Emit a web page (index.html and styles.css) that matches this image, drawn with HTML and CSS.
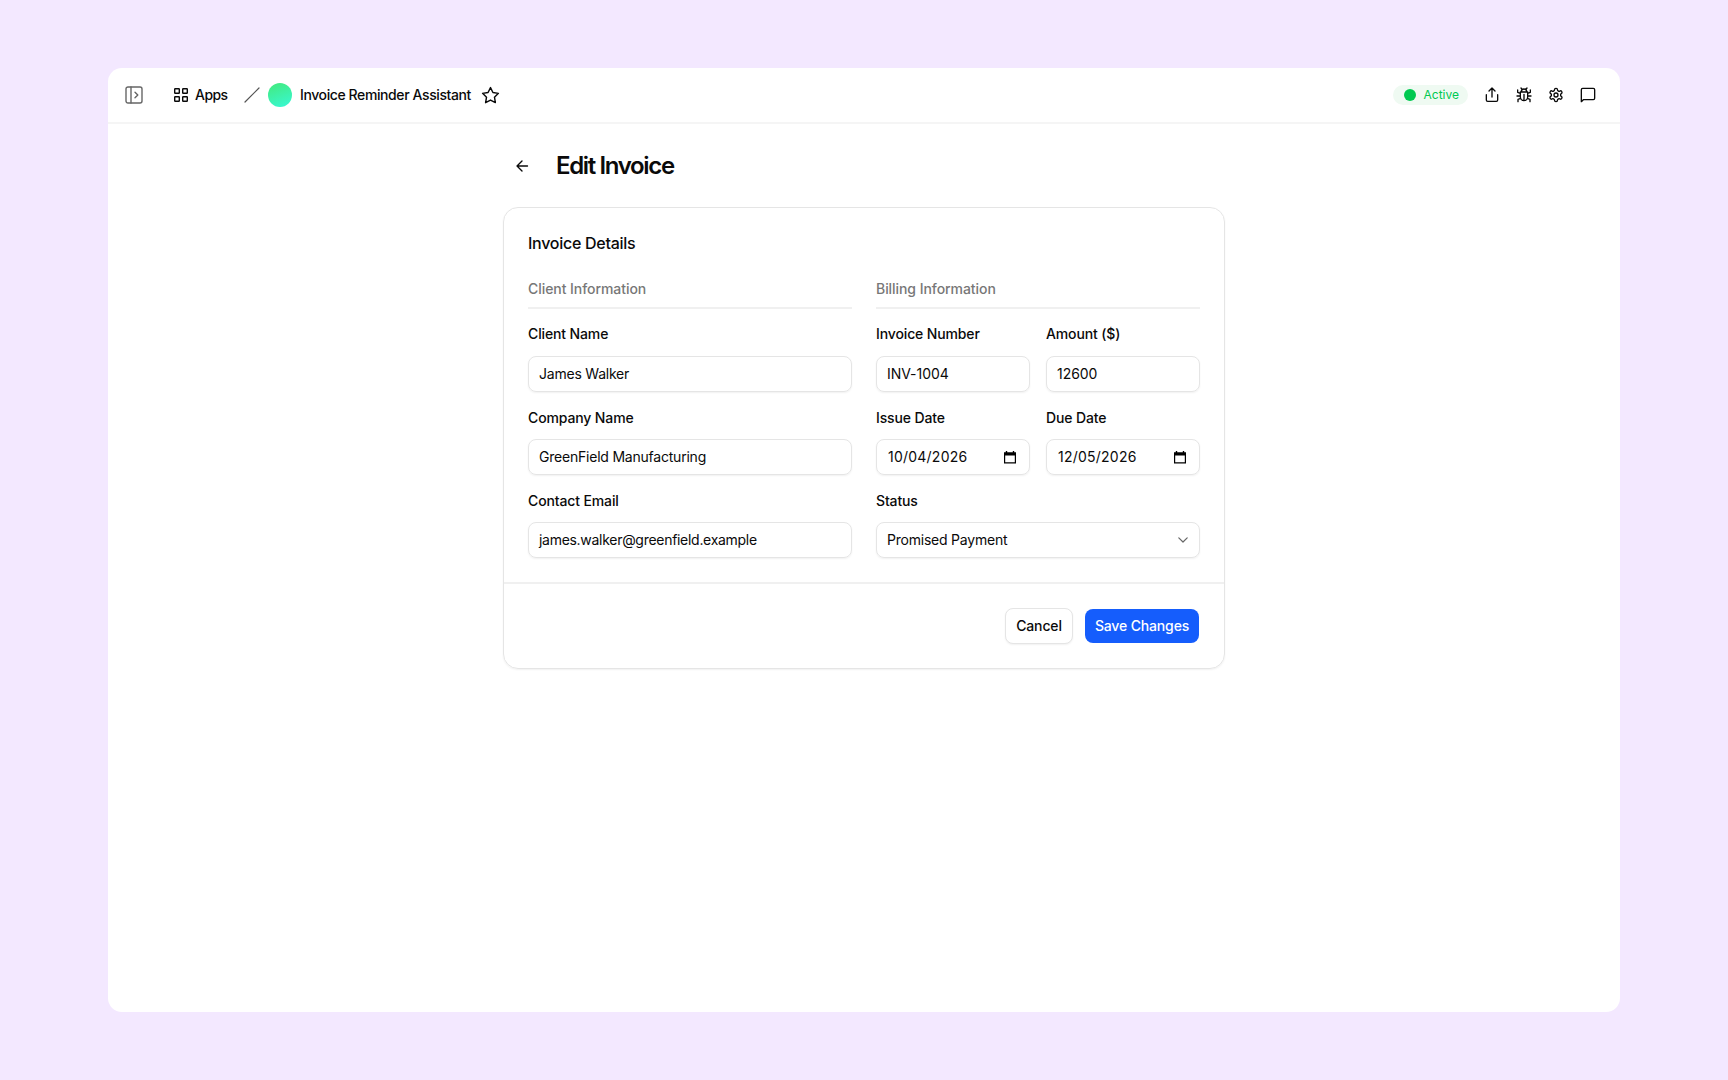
FILE: index.html
```html
<!DOCTYPE html>
<html lang="en">
<head>
<meta charset="utf-8">
<title>Edit Invoice</title>
<link rel="stylesheet" href="styles.css">
</head>
<body>
<div class="window">
  <header class="topbar">
    <div class="crumbs">
      <svg class="icon panel-icon" viewBox="0 0 18 18"><rect x="1" y="1" width="16" height="16" rx="2"/><path d="M6 1v16M10 6.2 12.8 9 10 11.8"/></svg>
      <svg class="icon grid-icon" viewBox="0 0 14 14"><rect x=".7" y=".7" width="4.6" height="4.6" rx=".5"/><rect x="8.7" y=".7" width="4.6" height="4.6" rx=".5"/><rect x=".7" y="8.7" width="4.6" height="4.6" rx=".5"/><rect x="8.7" y="8.7" width="4.6" height="4.6" rx=".5"/></svg>
      <span class="crumb apps">Apps</span>
      <svg class="icon slash" viewBox="0 0 16 16"><path d="M1 15 15 1"/></svg>
      <span class="avatar"></span>
      <span class="crumb app-name">Invoice Reminder Assistant</span>
      <svg class="icon star" viewBox="0 0 24 24"><path d="m12 2 3.09 6.26L22 9.27l-5 4.87 1.18 6.88L12 17.77l-6.18 3.25L7 14.14 2 9.27l6.91-1.01z"/></svg>
    </div>
    <div class="actions">
      <span class="pill"><span class="dot"></span><span class="pill-text">Active</span></span>
      <svg class="icon tool" viewBox="0 0 24 24"><path d="M12 15V1.500M7.500 6 12 1.500 16.500 6M3.500 11.500v8a2 2 0 0 0 2 2h13a2 2 0 0 0 2-2v-8"/></svg>
      <svg class="icon tool" viewBox="0 0 24 24"><path d="m7.500 1.500 2 2.500M14.500 4l2-2.500M8 7.500V7a4 4 0 0 1 8 0v.5M6.500 7.500h11V15a5.500 5.500 0 0 1-11 0zM12 20v-9M6.500 9.500 2.500 8V4.500M6.500 13.500H1.500M7 17l-4 1.500V22M17.500 9.500l4-1.500V4.500M22.500 13.500h-5M17 17l4 1.500V22"/></svg>
      <svg class="icon tool" viewBox="0 0 24 24"><path d="M12.220 2h-.440a2 2 0 0 0-2 2v.180a2 2 0 0 1-1 1.730l-.430.250a2 2 0 0 1-2 0l-.150-.080a2 2 0 0 0-2.730.730l-.220.380a2 2 0 0 0 .730 2.730l.150.100a2 2 0 0 1 1 1.720v.510a2 2 0 0 1-1 1.740l-.150.090a2 2 0 0 0-.730 2.730l.220.380a2 2 0 0 0 2.730.730l.150-.080a2 2 0 0 1 2 0l.430.250a2 2 0 0 1 1 1.730V20a2 2 0 0 0 2 2h.440a2 2 0 0 0 2-2v-.180a2 2 0 0 1 1-1.730l.430-.250a2 2 0 0 1 2 0l.150.080a2 2 0 0 0 2.730-.730l.220-.390a2 2 0 0 0-.730-2.730l-.150-.080a2 2 0 0 1-1-1.740v-.500a2 2 0 0 1 1-1.740l.150-.090a2 2 0 0 0 .730-2.730l-.220-.380a2 2 0 0 0-2.730-.730l-.150.080a2 2 0 0 1-2 0l-.430-.250a2 2 0 0 1-1-1.730V4a2 2 0 0 0-2-2z"/><circle cx="12" cy="12" r="3"/></svg>
      <svg class="icon tool" viewBox="0 0 24 24"><path d="M2 22V4a2 2 0 0 1 2-2h16a2 2 0 0 1 2 2v13a2 2 0 0 1-2 2H5z"/></svg>
    </div>
  </header>
  <main class="page">
    <div class="heading">
      <svg class="icon back" viewBox="0 0 16 16"><path d="M8 3 3 8l5 5M3 8h10.500"/></svg>
      <h1 class="title">Edit Invoice</h1>
    </div>
    <section class="card">
      <div class="card-body">
        <h2 class="card-title">Invoice Details</h2>
        <div class="columns">
          <div class="column">
            <h3 class="section">Client Information</h3>
            <div class="field"><span class="label">Client Name</span><div class="input"><span class="value">James Walker</span></div></div>
            <div class="field"><span class="label">Company Name</span><div class="input"><span class="value">GreenField Manufacturing</span></div></div>
            <div class="field"><span class="label">Contact Email</span><div class="input"><span class="value email">james.walker@greenfield.example</span></div></div>
          </div>
          <div class="column">
            <h3 class="section">Billing Information</h3>
            <div class="pair">
              <div class="field"><span class="label">Invoice Number</span><div class="input"><span class="value number">INV-1004</span></div></div>
              <div class="field"><span class="label">Amount ($)</span><div class="input"><span class="value number">12600</span></div></div>
            </div>
            <div class="pair">
              <div class="field"><span class="label">Issue Date</span><div class="input date"><span class="value">10/04/2026</span><svg class="calendar" viewBox="0 0 12 13"><path fill-rule="evenodd" d="M1.800 0h1.400v1.200h5.600V0h1.400v1.200H12v11.300H0V1.200h1.800zM1.200 4.500v6.800h9.600V4.500z"/></svg></div></div>
              <div class="field"><span class="label">Due Date</span><div class="input date"><span class="value">12/05/2026</span><svg class="calendar" viewBox="0 0 12 13"><path fill-rule="evenodd" d="M1.800 0h1.400v1.200h5.600V0h1.400v1.200H12v11.300H0V1.200h1.800zM1.200 4.500v6.800h9.600V4.500z"/></svg></div></div>
            </div>
            <div class="field"><span class="label">Status</span><div class="input select"><span class="value">Promised Payment</span><svg class="icon chevron" viewBox="0 0 10 6"><path d="m.8.8 4.200 4.200L9.200.8"/></svg></div></div>
          </div>
        </div>
      </div>
      <footer class="card-footer">
        <button class="button cancel">Cancel</button>
        <button class="button save">Save Changes</button>
      </footer>
    </section>
  </main>
</div>
</body>
</html>
```
FILE: styles.css
```css
* { box-sizing: border-box; }
body {
  margin: 0;
  height: 1080px;
  padding: 68px 108px;
  background: #f3e8ff;
  color: #0a0a0a;
  font: 400 14px/20px Inter, "Liberation Sans", sans-serif;
}
h1, h2, h3 { margin: 0; }
.window { height: 944px; border-radius: 14px; background: #fff; overflow: hidden; }
.icon { display: block; flex: none; fill: none; stroke: currentColor; stroke-width: 2; stroke-linecap: round; stroke-linejoin: round; }
.topbar { height: 56px; display: flex; justify-content: space-between; align-items: center; padding: 0 24px 0 17px; border-bottom: 2px solid #f5f5f5; }
.crumbs, .actions { display: flex; align-items: center; }
.panel-icon { width: 18px; height: 18px; color: #666; stroke-width: 1.4; margin-right: 31px; }
.grid-icon { width: 14px; height: 14px; stroke-width: 1.4; margin-right: 7px; }
.crumb { font-weight: 500; font-size: 14px; letter-spacing: -0.4px; white-space: nowrap; }
.apps { width: 33px; letter-spacing: -0.55px; }
.slash { width: 16px; height: 16px; stroke-width: 1.2; color: #555; margin: 0 8px 0 16px; }
.avatar { width: 24px; height: 24px; border-radius: 50%; background: linear-gradient(160deg, #43e97b, #38f9d7); margin-right: 8px; }
.app-name { width: 171px; }
.star { width: 19px; height: 19px; margin-left: 9.500px; stroke-width: 1.8; }
.pill { display: flex; align-items: center; width: 75px; height: 20px; padding-left: 10.500px; border-radius: 10px; background: #effaf2; color: #00c950; font-size: 12px; font-weight: 400; margin-right: 16px; }
.dot { width: 12px; height: 12px; border-radius: 50%; background: #00c950; margin-right: 8px; }
.tool { width: 16px; height: 16px; }
.tool + .tool { margin-left: 16px; }
.page { width: 722px; margin: 0 auto; padding-top: 24px; }
.heading { display: flex; align-items: center; height: 35px; padding-left: 11px; }
.back { width: 16px; height: 16px; stroke-width: 1.35; }
.title { margin-left: 26px; font-size: 24px; line-height: 32px; padding-top: 1px; font-weight: 600; letter-spacing: -1.350px; }
.card { margin-top: 23.500px; border: 1px solid #e5e5e5; border-radius: 15px; box-shadow: 0 1px 2px rgba(0,0,0,.06); }
.card-body { padding: 23.500px 24px 24px; }
.card-title { font-size: 16px; line-height: 24px; font-weight: 500; letter-spacing: -0.27px; }
.columns { display: grid; grid-template-columns: 1fr 1fr; gap: 24px; margin-top: 24px; }
.column { display: grid; gap: 15.200px; align-content: start; }
.section { height: 29.800px; font-size: 14px; line-height: 20px; font-weight: 500; letter-spacing: -0.06px; color: #777; border-bottom: 2px solid #f0f0f0; }
.pair { display: grid; grid-template-columns: 1fr 1fr; gap: 16px; }
.label { display: block; font-weight: 500; line-height: 20px; letter-spacing: -0.13px; padding-top: .5px; margin-bottom: 11.500px; }
.input { display: flex; align-items: center; height: 36px; padding: 0 11px 0 10px; border: 1px solid #e5e5e5; border-radius: 8px; box-shadow: 0 1px 2px rgba(0,0,0,.06); }
.value { letter-spacing: -0.22px; }
.value.number { letter-spacing: -0.05px; }
.value.email { letter-spacing: -0.29px; }
.date, .select { justify-content: space-between; }
.date { padding: 0 13px 0 11px; }
.date .value { letter-spacing: 0.23px; }
.calendar { width: 12px; height: 13px; }
.chevron { width: 10px; height: 6px; stroke-width: 1.2; color: #666; }
.card-footer { display: flex; justify-content: flex-end; align-items: center; gap: 12px; padding: 23.500px 25px 23.700px 24px; border-top: 2px solid #f0f0f0; }
.button { height: 36px; border-radius: 8px; font: inherit; font-weight: 500; padding: 0; letter-spacing: -0.15px; }
.cancel { width: 68px; border: 1px solid #e5e5e5; background: #fff; color: #0a0a0a; box-shadow: 0 1px 2px rgba(0,0,0,.06); }
.save { width: 114px; height: 34px; border: 0; background: #155dfc; color: #fff; }
```
